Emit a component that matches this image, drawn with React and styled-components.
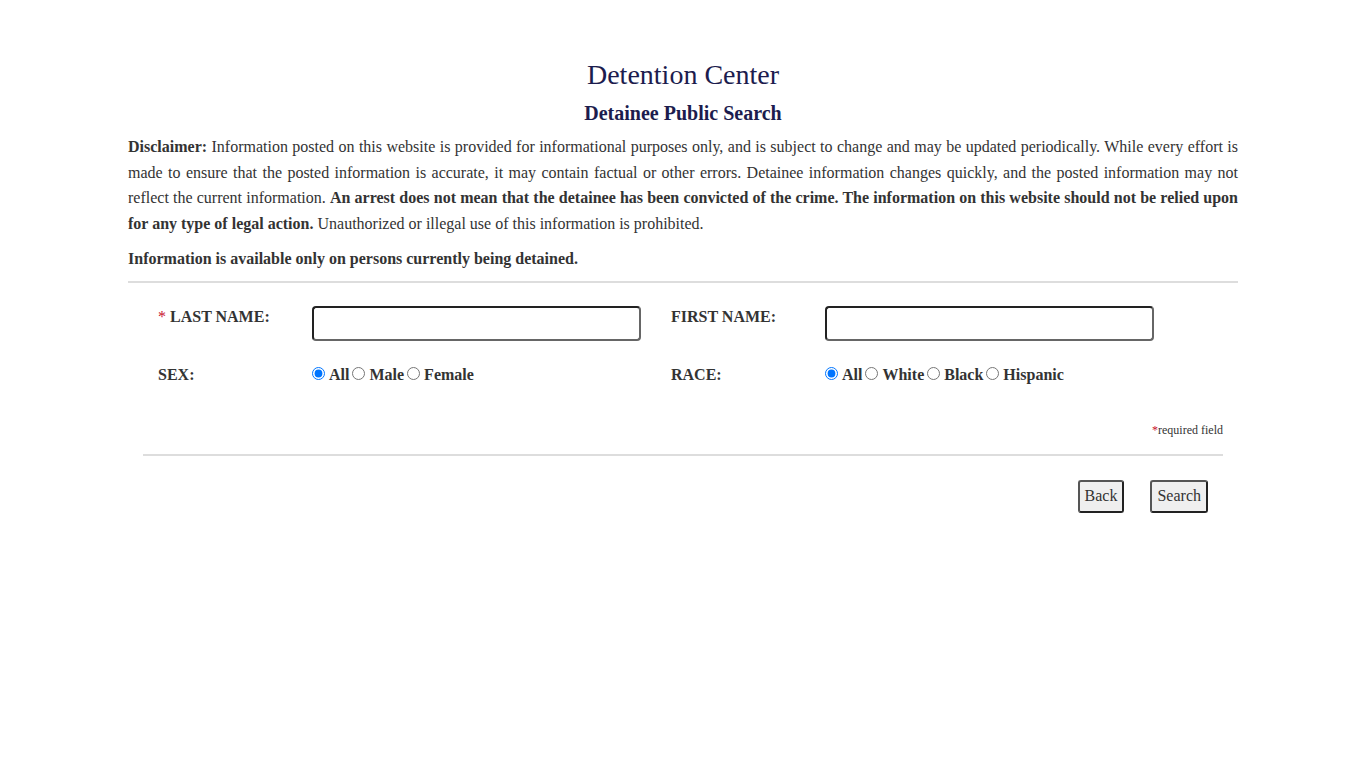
import React from 'react';
import styled, { createGlobalStyle } from 'styled-components';

const GlobalStyle = createGlobalStyle`
    body {
        margin: 0;
        background: #fff;
        font-family: "Liberation Serif", "Times New Roman", serif;
        color: #333;
    }
`;

const App = () => {
    return (
        <>
            <GlobalStyle />
            <Container>
                <Title>Detention Center</Title>
                <SubTitle>Detainee Public Search</SubTitle>
                <Disclaimer>
                    <b>Disclaimer:</b> Information posted on this website is provided for informational purposes only, and is subject to change and may be updated periodically. While every effort is made to ensure that the posted information is accurate, it may contain factual or other errors. Detainee information changes quickly, and the posted information may not reflect the current information. <b>An arrest does not mean that the detainee has been convicted of the crime. The information on this website should not be relied upon for any type of legal action.</b> Unauthorized or illegal use of this information is prohibited.
                </Disclaimer>
                <Notice>Information is available only on persons currently being detained.</Notice>
                <Rule />
                <Form>
                    <FieldLabel><Req>*</Req> LAST NAME:</FieldLabel>
                    <div><TextInput type="text" /></div>
                    <FieldLabel>FIRST NAME:</FieldLabel>
                    <div><TextInput type="text" /></div>

                    <FieldLabel $row>SEX:</FieldLabel>
                    <RadioGroup>
                        <Radio name="sex" defaultChecked />All
                        <Radio name="sex" />Male
                        <Radio name="sex" />Female
                    </RadioGroup>
                    <FieldLabel $row>RACE:</FieldLabel>
                    <RadioGroup>
                        <Radio name="race" defaultChecked />All
                        <Radio name="race" />White
                        <Radio name="race" />Black
                        <Radio name="race" />Hispanic
                    </RadioGroup>
                </Form>
                <RequiredNote><Req>*</Req>required field</RequiredNote>
                <Rule $inset />
                <Actions>
                    <Button>Back</Button>
                    <Button>Search</Button>
                </Actions>
            </Container>
        </>
    )
}

export default App;

const Container = styled.div`
    width: 1110px;
    margin: 0 auto;
    padding-top: 58px;
`;

const Title = styled.h1`
    margin: 0;
    text-align: center;
    font-weight: 400;
    font-size: 28px;
    line-height: 34px;
    color: #1c1c4e;
`;

const SubTitle = styled.h2`
    margin: 9px 0 0;
    text-align: center;
    font-weight: 700;
    font-size: 20px;
    line-height: 24px;
    color: #1c1c4e;
`;

const Disclaimer = styled.p`
    margin: 9px 0 0;
    font-size: 16px;
    line-height: 25.6px;
    text-align: justify;
`;

const Notice = styled.p`
    margin: 10px 0 0;
    font-size: 16px;
    font-weight: 700;
    line-height: 25.6px;
`;

const Rule = styled.hr`
    border: 0;
    border-top: 2px solid #ddd;
    margin: ${props => props.$inset ? '16px 15px 0' : '9px 0 0'};
`;

const Form = styled.div`
    display: grid;
    grid-template-columns: 154px 359px 154px 1fr;
    row-gap: 24px;
    padding: 23px 30px 0;
    align-items: start;
`;

const FieldLabel = styled.div`
    font-size: 16px;
    font-weight: 700;
    line-height: 20px;
    padding-top: ${props => props.$row ? '0' : '1px'};
`;

const Req = styled.span`
    color: #c8102e;
    font-weight: 400;
`;

const TextInput = styled.input`
    box-sizing: border-box;
    width: 329px;
    height: 35px;
    border: 2px solid #222;
    border-bottom-color: #666;
    border-right-color: #666;
    border-radius: 4px;
    outline: none;
    font-family: inherit;
    font-size: 16px;
    padding: 2px 6px;
`;

const RadioGroup = styled.div`
    display: flex;
    align-items: center;
    font-size: 16px;
    font-weight: 700;
    line-height: 20px;
`;

const Radio = styled.input.attrs({ type: 'radio' })`
    width: 13px;
    height: 13px;
    margin: 0 4px 2px 0;
    &:not(:first-child) {
        margin-left: 3px;
    }
`;

const RequiredNote = styled.div`
    margin-top: 37px;
    padding-right: 15px;
    text-align: right;
    font-size: 12px;
    line-height: 16px;
    color: #333;
`;

const Actions = styled.div`
    display: flex;
    justify-content: flex-end;
    gap: 26px;
    padding: 24px 30px 0 0;
`;

const Button = styled.button`
    height: 33px;
    padding: 0 5px;
    font-family: inherit;
    font-size: 16px;
    color: #333;
    background: #efefef;
    border: 2px solid #222;
    border-top-color: #555;
    border-left-color: #555;
    border-radius: 3px;
`;
